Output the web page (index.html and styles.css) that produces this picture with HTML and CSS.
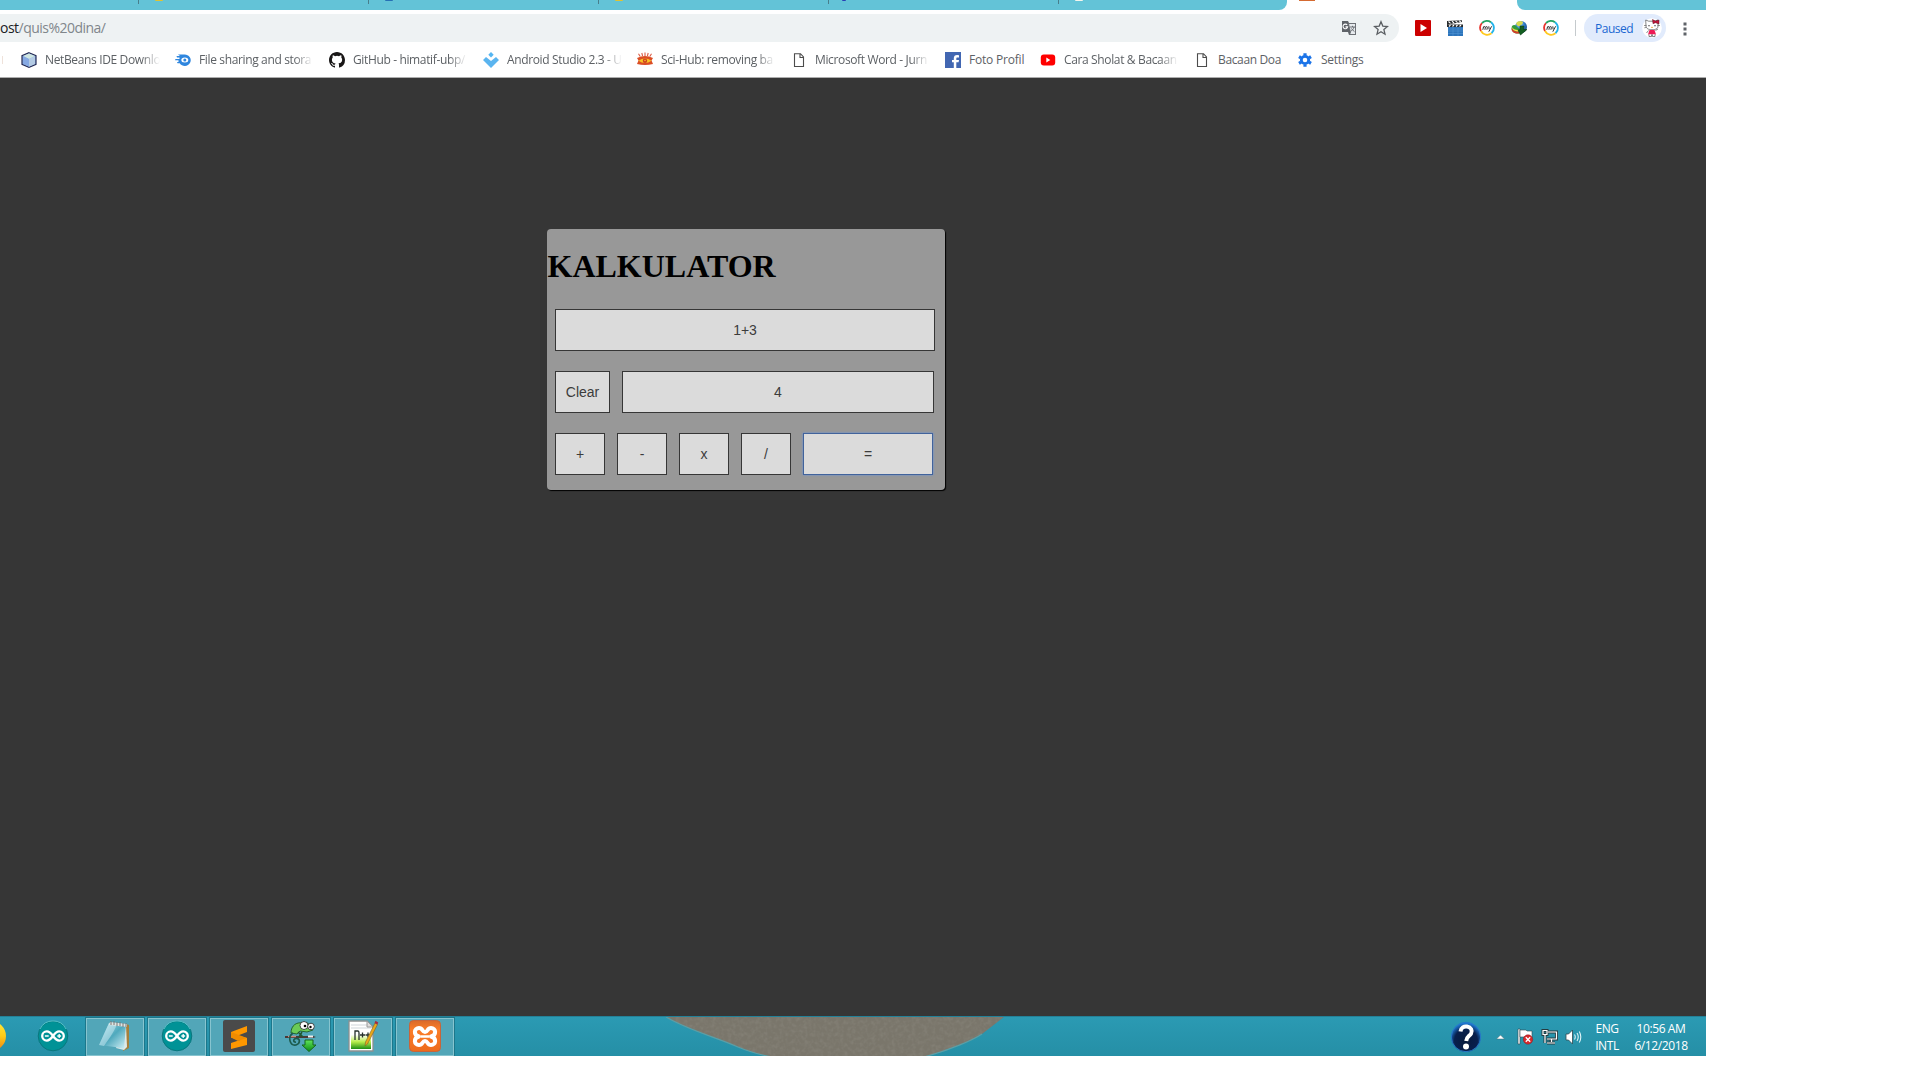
FILE: index.html
```
<!DOCTYPE html>
<html lang="id">
<head>
<meta charset="utf-8">
<title>Kalkulator</title>
<link rel="stylesheet" href="styles.css">
</head>
<body>
<svg class="defs" width="0" height="0">
  <defs>
    <linearGradient id="green" x1="0" y1="0" x2="0" y2="1"><stop offset="0" stop-color="#62e65d"/><stop offset="1" stop-color="#0a8c12"/></linearGradient>
    <linearGradient id="pad" x1="0" y1="0" x2="1" y2="1"><stop offset="0" stop-color="#b9e6ef"/><stop offset=".5" stop-color="#4fa9bd"/><stop offset="1" stop-color="#d8f3f8"/></linearGradient>
    <linearGradient id="npp" x1="0" y1="0" x2="0" y2="1"><stop offset=".2" stop-color="#fff"/><stop offset=".6" stop-color="#b9ee4c"/><stop offset="1" stop-color="#1c8e13"/></linearGradient>
    <linearGradient id="orange" x1="0" y1="0" x2="0" y2="1"><stop offset="0" stop-color="#d96a2a"/><stop offset=".3" stop-color="#fb7d28"/><stop offset="1" stop-color="#ed6b1c"/></linearGradient>
    <radialGradient id="help" cx=".5" cy=".62" r=".6"><stop offset="0" stop-color="#071a3d"/><stop offset=".65" stop-color="#081f4c"/><stop offset="1" stop-color="#1f7fdc"/></radialGradient>
    <radialGradient id="globe" cx=".4" cy=".3" r=".8"><stop offset="0" stop-color="#8dc8f5"/><stop offset=".5" stop-color="#2d78c4"/><stop offset="1" stop-color="#123c70"/></radialGradient>
    <linearGradient id="ffx" x1="0" y1="0" x2="0" y2="1"><stop offset="0" stop-color="#ffe93b"/><stop offset=".5" stop-color="#ffcb18"/><stop offset="1" stop-color="#ef8010"/></linearGradient>
    <symbol id="page" viewBox="0 0 16 16"><path d="M3.500 1.700h6l3 3.300v9.500h-9zM9 1.700v3.800h4" fill="none" stroke="#4c4c4c" stroke-width="1.100"/></symbol>
    <symbol id="my" viewBox="0 0 16 16">
      <g fill="none" stroke-width="1.800"><path d="M2 11A7 7 0 0 1 3 3" stroke="#e8352e"/><path d="M3 3A7 7 0 0 1 12 2.300" stroke="#25a565"/><path d="M12 2.300A7 7 0 0 1 12.500 13.300" stroke="#22b3ea"/><path d="M12.500 13.300A7 7 0 0 1 2 11" stroke="#ffc91f"/></g>
      <path d="M3.800 9.800l.8-3.300M4.400 7.400q2-1.800 2 0l-.5 2.400M6.400 7.400q2-1.800 2 0l-.5 2.400M9.800 6.300l.3 3M12.600 6.300l-2.800 5.400" fill="none" stroke="#343434" stroke-width="1"/>
    </symbol>
    <symbol id="arduino" viewBox="0 0 32 32">
      <circle cx="16" cy="16" r="14.800" fill="#009296" stroke="#0a777e" stroke-width="1"/><path d="M3 9A14.500 14.500 0 0 1 29 9" fill="none" stroke="#55c3c9"/>
      <path d="M16 16c-2.500-3.500-4.200-4.600-6.200-4.600a4.600 4.600 0 0 0 0 9.200c2 0 3.700-1.100 6.200-4.600s4.200-4.600 6.200-4.600a4.600 4.600 0 0 1 0 9.200c-2 0-3.700-1.100-6.200-4.600z" fill="none" stroke="#fff" stroke-width="2.300"/><path d="M7.900 16h3.800M20.300 16h3.800M22.200 14.100v3.800" stroke="#fff" stroke-width="1.300"/>
    </symbol>
  </defs>
</svg>

<div class="screen">
  <div class="tabs">
    <div class="tab first"></div>
    <div class="tab"><i class="fav yellow"></i></div>
    <div class="tab"><i class="fav blue"></i></div>
    <div class="tab"><i class="fav yellow"></i></div>
    <div class="tab"><i class="fav navy"></i></div>
    <div class="tab last"><i class="fav pale"></i></div>
    <div class="tab active"><i class="fav xampp"></i></div>
    <div class="tab rest"></div>
  </div>

  <div class="toolbar">
    <div class="omnibox">
      <div class="url"><b>ost</b>/quis%20dina/</div>
      <svg class="i16" viewBox="0 0 16 16"><path d="M1 1h6l1 2h7v12H8l-1-3H1z" fill="#5f6368"/><path d="M7.500 3.500h7v11H8.500l1-2z" fill="#e8ecef" stroke="#5f6368" stroke-width=".8"/><path d="M6.200 5A2.300 2.300 0 1 0 6.600 6.900H4.500" fill="none" stroke="#fff" stroke-width="1.100"/><path d="M9 7h5M11.500 5.800V7M13 7c-.5 2-1.600 3.300-3.400 4.300M10.200 8.500l3.300 3.200" fill="none" stroke="#5f6368" stroke-width=".9"/></svg>
      <svg class="i16 star" viewBox="0 0 16 16"><path d="M8 1.700l1.800 4.400 4.700.4-3.600 3.100 1.100 4.600L8 11.700l-4 2.500 1.100-4.600L1.500 6.500l4.700-.4z" fill="none" stroke="#5a5e62" stroke-width="1.300"/></svg>
    </div>
    <div class="extensions">
      <svg class="i16" viewBox="0 0 16 16"><rect width="16" height="16" rx="1" fill="#c00"/><path d="M5.500 4l6.500 4-6.500 4z" fill="#fff"/></svg>
      <svg class="i16" viewBox="0 0 16 16"><path d="M1 6.500h15V16H1z" fill="#2c74bb"/><path d="M1 9h15M1 11h15M1 13.500h15M6 6v10M11 6v10" stroke="#559bd8" stroke-width=".5"/><path d="M0 1l15-.8V2L0 4.500zM0 4.500h16V7H0z" fill="#272a2c"/><path d="M1.500 1.500l2 1.800M5 1.200l2 1.800M8.500 .9l2 1.800M12 .6l2 1.600M2 6.500l1.500-1.500M5.500 6.500L7 5M9 6.500L10.500 5M12.500 6.500L14 5" stroke="#fff" stroke-width="1.100"/></svg>
      <svg class="i16"><use href="#my"/></svg>
      <svg class="i16" viewBox="0 0 16 16"><circle cx="10" cy="7" r="6" fill="url(#globe)"/><path d="M6 2c3-2 6-1 6 .5S10 5 8.500 6 6 5 5 4z" fill="#d8d94e"/><path d="M1 6c2-2 4-1 5 1l4 3-1 3C5 15-1 12 1 6z" fill="#329a3c"/><path d="M.6 8c2 3 4 4 8 3.500v2C4 14 0 12 .6 8z" fill="#d9372a"/><path d="M1 7c1 2 4 3.500 7 3v1.300C4 12 1.200 10 1 7z" fill="#ffe04a"/><path d="M9 6h4l-.5 3.500H16L9.500 15 7 10h2z" fill="#145f20" stroke="#063d12" stroke-width=".6"/></svg>
      <svg class="i16"><use href="#my"/></svg>
    </div>
    <div class="divider"></div>
    <div class="profile"><span>Paused</span>
      <svg width="20" height="20" viewBox="0 0 20 20"><circle cx="10" cy="10" r="9.800" fill="#fff"/><path d="M4 8l-.3-6 3 1.200h6L16 2v6c0 2.800-2.500 3.700-6 3.700S4 10.500 4 8z" fill="#fff" stroke="#555" stroke-width=".7"/><path d="M10.500 1.500l3 1.500 3.500-1v4l-3.500-1.300-2.500 1z" fill="#c4143a" stroke="#5b1625" stroke-width=".5"/><path d="M7 7v1.300M13 7v1.300" stroke="#222"/><path d="M2 7.500h2.500M2.300 9.800l2.300-.5M15.500 7.500H18" stroke="#555" stroke-width=".6"/><ellipse cx="10" cy="9.300" rx=".9" ry=".6" fill="#eca32a"/><path d="M7.500 12h5l1.500 4.500H6z" fill="#ee1b55"/><path d="M6.500 12.500l-2 2.500M13.500 12.500L16 11M7 16.500v2h2.500v-2M10.500 16.500v2H13v-2" stroke="#555" stroke-width=".7" fill="#fff"/></svg>
    </div>
    <svg class="more" width="4" height="14" viewBox="0 0 4 14"><path d="M.5.5h3v3h-3zM.5 5.500h3v3h-3zM.5 10.500h3v3h-3z" fill="#5f6368"/></svg>
  </div>

  <div class="bookmarks">
    <div class="cut"></div>
    <div class="bm long"><svg class="i16" viewBox="0 0 16 16"><path d="M8 .7l7 3v8.600L8 15.300l-7-3V3.700z" fill="#8eb2e2" stroke="#252b55" stroke-width="1.200"/><path d="M8 1.500L14 4 8 7 2 4z" fill="#cfe6e1"/><path d="M8 7l6-3v8l-6 2.700z" fill="#b4cbe4"/><path d="M2 4l6 3v7.700L2 12z" fill="#86a9e3"/></svg><span>NetBeans IDE Downlo</span></div>
    <div class="bm long"><svg class="i16" viewBox="0 0 16 16"><path d="M3 2.500h6.500A6 5.700 0 1 1 4.700 11.300H2.500L2 10h1.500V8.300H0L.5 7h4V5.500H2L1.500 4H5z" fill="#2f86de"/><ellipse cx="9.800" cy="8" rx="3.500" ry="2.500" fill="#fff"/><circle cx="9.800" cy="8" r="1.500" fill="#2f86de"/></svg><span>File sharing and stora</span></div>
    <div class="bm long"><svg class="i16" viewBox="0 0 16 16"><path fill="#191717" d="M8 0C3.580 0 0 3.580 0 8c0 3.540 2.290 6.530 5.470 7.590.4.070.55-.17.55-.38 0-.19-.01-.82-.01-1.490-2.010.37-2.530-.49-2.690-.94-.09-.23-.48-.94-.82-1.130-.28-.15-.68-.52-.01-.53.63-.01 1.080.58 1.230.82.72 1.210 1.870.87 2.330.66.070-.52.280-.87.510-1.070-1.780-.2-3.640-.89-3.640-3.950 0-.87.310-1.590.82-2.150-.08-.2-.36-1.020.08-2.120 0 0 .67-.21 2.200.82a7.600 7.600 0 0 1 4 0c1.530-1.040 2.200-.82 2.200-.82.44 1.100.16 1.920.08 2.120.51.56.82 1.270.82 2.150 0 3.070-1.870 3.750-3.650 3.950.29.25.54.73.54 1.480 0 1.070-.01 1.930-.01 2.200 0 .21.15.46.55.38A8 8 0 0 0 16 8c0-4.420-3.580-8-8-8z"/></svg><span>GitHub - himatif-ubp/</span></div>
    <div class="bm long"><svg class="i16" viewBox="0 0 16 16"><path d="M8 0l2.700 2.700L8 5.400 5.300 2.700z" fill="#55b6f2"/><path d="M0 8l3-3 5 4 5-4 3 3-8 8z" fill="#5ab4ef"/></svg><span>Android Studio 2.3 - U</span></div>
    <div class="bm long"><svg class="i16" viewBox="0 0 16 16"><path d="M1.500 1.800l1.700 2.700M4.800 1l.8 3M8 .5V4M11.200 1l-.8 3M14.500 1.800l-1.700 2.700" stroke="#dc5c45" stroke-width="1.100"/><path d="M0 6q8-4 16 0l-1.500 2.500L16 12q-8 2-16 0l1.500-3.500z" fill="#db4d24"/><path d="M1.500 8.700Q8 4.500 14.500 8.700 8 13.500 1.500 8.700z" fill="#f9c325"/><circle cx="8" cy="8.700" r="2.200" fill="#cf4220"/><circle cx="8" cy="8.500" r=".8" fill="#fac32b"/></svg><span>Sci-Hub: removing ba</span></div>
    <div class="bm long"><svg class="i16"><use href="#page"/></svg><span>Microsoft Word - Jurn</span></div>
    <div class="bm foto"><svg class="i16" viewBox="0 0 16 16"><path d="M0 0h16v16H0z" fill="#4267b2"/><path d="M14 3.200V5.500h-1.500c-.9 0-1.200.5-1.200 1.200V8H14l-.4 2.300h-2.300V16H8.800v-5.700H7V8h1.800V6.300C8.800 4.200 10 3 12.100 3z" fill="#fff"/></svg><span>Foto Profil</span></div>
    <div class="bm long"><svg class="i16" viewBox="0 0 16 16"><rect x=".8" y="2.500" width="14.400" height="11" rx="3" fill="#f00"/><path d="M6.300 5.500l4 2.500-4 2.500z" fill="#fff"/></svg><span>Cara Sholat &amp; Bacaan</span></div>
    <div class="bm doa"><svg class="i16"><use href="#page"/></svg><span>Bacaan Doa</span></div>
    <div class="bm set"><svg class="i16" viewBox="0 0 16 16"><circle cx="9" cy="8" r="3.700" fill="none" stroke="#1a73e8" stroke-width="2.800"/><path d="M9 1.200v2.300M9 12.500v2.300M3 4.600l2 1.200M13 10.200l2 1.200M3 11.400l2-1.200M13 5.800l2-1.200" stroke="#1a73e8" stroke-width="3.200"/></svg><span>Settings</span></div>
  </div>

  <main class="content">
    <form class="calculator">
      <h1>KALKULATOR</h1>
      <div class="row"><div class="key display">1+3</div></div>
      <div class="row"><div class="key clear">Clear</div><div class="key result">4</div></div>
      <div class="row"><div class="key op">+</div><div class="key op">-</div><div class="key op">x</div><div class="key op">/</div><div class="key equals">=</div></div>
    </form>
  </main>

  <div class="taskbar">
    <svg class="wallpaper" width="400" height="39" viewBox="0 0 400 39">
      <defs><filter id="grain" x="0" y="0" width="1" height="1"><feTurbulence type="fractalNoise" baseFrequency=".25" numOctaves="3" seed="4"/><feColorMatrix values="0 0 0 0 .35  0 0 0 0 .34  0 0 0 0 .3  .5 0 0 0 -.2"/><feComposite in2="SourceGraphic" operator="in"/></filter></defs>
      <path d="M26 0C50 14 76 20 98 30Q112 36 132 40H284C310 33 333 23 342 17L364 0z" fill="#7a766b"/><path d="M26 0C50 14 76 20 98 30Q112 36 132 40H284C310 33 333 23 342 17L364 0z" filter="url(#grain)"/>
      <path d="M26 0C50 14 76 20 98 30Q112 36 132 40M284 40C310 33 333 23 342 17" fill="none" stroke="#5a9fa7" stroke-width="1.200"/>
    </svg>
    <svg class="edge" width="6" height="40" viewBox="0 0 6 40"><circle cx="-9" cy="19" r="15" fill="url(#ffx)"/></svg>
    <div class="app plain"><svg width="32" height="32"><use href="#arduino"/></svg></div>
    <div class="app"><svg width="32" height="32" viewBox="0 0 32 32"><path d="M27 4l3 1v23l-6 3z" fill="#a5803c"/><path d="M27 5l1 22-3 3-8-2z" fill="#dfe9e8"/><path d="M10 3l17 2-2 24-9-2L0 25z" fill="url(#pad)"/><path d="M10 3l8 1C15 13 8 21 5 26l-5-1z" fill="#e0f5fa" opacity=".45"/><path d="M11 2l17 2v3L10 5z" fill="#dfe5e3"/><path d="M12 1v4M15 1v4M18 2v4M21 2v4M24 3v4M27 3v4" stroke="#777" stroke-width="1"/></svg></div>
    <div class="app"><svg width="32" height="32"><use href="#arduino"/></svg></div>
    <div class="app"><svg width="32" height="32" viewBox="0 0 32 32"><rect width="32" height="32" rx="2" fill="#4a4a4a"/><path d="M8 12L24 6v6l-9 3.500L24 18v7L8 29v-6l9-3-9-2.500z" fill="#ff9800"/><path d="M8 12l16 6-9 3-7-3.500z" fill="#f08c00"/></svg></div>
    <div class="app"><svg width="32" height="32" viewBox="0 0 32 32"><path d="M0 16h28l3 1-3 1H0z" fill="#4b3936"/><path d="M3 16.500h8" stroke="#c98e81" stroke-width="1.500"/><path d="M23 16.500h5" stroke="#eee" stroke-width="2"/><path d="M6 13C6 5 12 2 17 3c5-2 9 2 11 7l-6 2-7-1-3 3z" fill="#6bcb57" stroke="#14511b" stroke-width=".8"/><path d="M8 13C2 17 5 26 11 25c5-2 4-7 0-6.500-3 .5-3 4 0 3.500" fill="none" stroke="#1c5b4e" stroke-width="1.700"/><path d="M13 12l5 5M17 12l-3 5" stroke="#205831" stroke-width="1.500"/><circle cx="19" cy="5.500" r="4" fill="#fff" stroke="#222" stroke-width=".8"/><circle cx="26" cy="6.500" r="3.300" fill="#fff" stroke="#222" stroke-width=".8"/><circle cx="20" cy="6" r="1.300"/><circle cx="25.500" cy="7" r="1.200"/><path d="M20 20h8v5h3l-7 6.500-7-6.500h3z" fill="url(#green)" stroke="#16671d"/></svg></div>
    <div class="app"><svg width="32" height="32" viewBox="0 0 32 32"><path d="M2 1h18l6 6v24H2z" fill="#fff" stroke="#8c9090" stroke-width="1.300"/><path d="M4 5h16M4 8h20" stroke="#cfd5da"/><path d="M4 11h20v18H4z" fill="url(#npp)"/><path d="M20 1v6h6z" fill="#ddd" stroke="#9a9a9a"/><path d="M8 20v-9h3q1 0 1 2v7M13 15h5M15.500 12.500v5M18.500 15h5M21 12.500v5" fill="none" stroke="#26302c" stroke-width="1.300"/><path d="M28 3l2.500 1.500L20.500 24 18 26l.5-4z" fill="#e9a719" stroke="#77622f" stroke-width=".6"/><path d="M28.500 .8l2.800 1.800-1 2-2.800-1.600z" fill="#a82b40"/></svg></div>
    <div class="app"><svg width="32" height="32" viewBox="0 0 32 32"><rect x=".5" y=".5" width="31" height="31" rx="4" fill="url(#orange)" stroke="#c7653a"/><path d="M10 16.500C4 15 5 8 10 8c4 0 3 4 6 4s2-4 6-4c5 0 6 7 0 8.500 6 1.500 5 8.500 0 8.500-4 0-3-4-6-4s-2 4-6 4c-5 0-6-7 0-8.500z" fill="none" stroke="#fff" stroke-width="4" stroke-linejoin="round"/><path d="M12 16.500h8" stroke="#fff" stroke-width="2.500"/></svg></div>

    <div class="tray">
      <svg class="help" width="32" height="32" viewBox="0 0 32 32"><circle cx="16" cy="16" r="14.700" fill="url(#help)" stroke="#2779c9"/><path d="M10.500 10.500C11 6.500 14 5 17 5.500c4 .6 5.800 4 4 7.200-1.500 2.500-4.500 3-4.800 7.300" fill="none" stroke="#fff" stroke-width="4"/><circle cx="16" cy="25.500" r="3" fill="#fff"/></svg>
      <svg class="up" width="9" height="6" viewBox="0 0 9 6"><path d="M.5 5h8L4.500 1z" fill="#fff" stroke="#466d76" stroke-width=".5"/></svg>
      <svg class="flag" width="17" height="17" viewBox="0 0 17 17"><path d="M1 1h2v15H1z" fill="#fff" stroke="#33484d" stroke-width=".6"/><path d="M3 2h6l1 1h5v7H9L8 9H3z" fill="#fff" stroke="#33484d" stroke-width=".6"/><circle cx="11" cy="11.500" r="4.700" fill="#d8292b" stroke="#8b1e20" stroke-width=".5"/><path d="M8.800 9.300l4.400 4.400M13.200 9.300l-4.400 4.400" stroke="#fff" stroke-width="1.400"/></svg>
      <svg class="net" width="18" height="16" viewBox="0 0 18 16"><g fill="none" stroke="#253b40" stroke-width="3"><path d="M7 3h8.500v7H6M10 10v3M6 14h8"/><path d="M2 1.500h4v4H2zM4 5.500V14"/></g><g fill="none" stroke="#fff" stroke-width="1.200"><path d="M7 3h8.500v7H6M10.500 10v3M6 14h8M2 1.500h4v4H2zM4 5.500V14"/></g></svg>
      <svg class="sound" width="17" height="16" viewBox="0 0 17 16"><path d="M1 5h2.500l4-4v14l-4-4H1z" fill="#fff" stroke="#304a50" stroke-width=".8"/><path d="M9.500 5.500q1.500 2.500 0 5M12 4q2.500 4 0 8M14.300 2.500q3 5.500 0 11" fill="none" stroke="#dff4f6" stroke-width="1.100"/></svg>
      <div class="lang"><span>ENG</span><span>INTL</span></div>
      <div class="clock"><span>10:56 AM</span><span>6/12/2018</span></div>
    </div>
  </div>
</div>
</body>
</html>
```
FILE: styles.css
```
* { box-sizing: border-box; }
body { margin: 0; background: #fff; font-family: "Open Sans", "Noto Sans", sans-serif; }
svg { display: block; flex: none; }
.defs { position: absolute; }
.i16 { width: 16px; height: 16px; }
.screen { width: 1706px; height: 1056px; display: flex; flex-direction: column; overflow: hidden; }

.tabs { height: 10px; display: flex; background: #fff; }
.tab { width: 230px; height: 10px; flex: none; background: #63c3d7; background-image: linear-gradient(#487f8c, #487f8c); background-size: 1px 4px; background-repeat: no-repeat; padding-left: 16px; }
.tab.first { width: 138px; background-image: none; }
.tab.last { width: 229px; border-bottom-right-radius: 8px; }
.tab.active { background: #fff; padding-left: 12px; }
.tab.rest { width: 189px; background-image: none; border-bottom-left-radius: 8px; }
.fav { display: block; width: 8px; height: 1px; margin-left: 1px; border-radius: 0 0 4px 4px; }
.yellow { background: #e0c330; }
.blue { background: #2671b5; }
.navy { width: 4px; margin-left: -2px; background: #2740b5; }
.pale { background: #f5f6ee; }
.xampp { width: 16px; margin-left: 0; background: #d56a31; border-radius: 0; }

.toolbar { height: 36px; flex: none; display: flex; align-items: flex-start; padding-top: 4px; }
.omnibox { width: 1399px; height: 28px; background: #eef2f3; border-radius: 0 14px 14px 0; display: flex; align-items: center; padding-right: 10px; }
.url { flex: 1; font-size: 14px; line-height: 28px; letter-spacing: -.52px; color: #80868b; white-space: nowrap; }
.url b { font-weight: 400; color: #202124; }
.star { margin-left: 16px; }
.extensions { display: flex; gap: 16px; padding: 6px 0 0 16px; }
.divider { width: 1px; height: 16px; background: #c5cacd; margin: 6px 8px 0 16px; }
.profile { width: 82px; height: 28px; border-radius: 14px; background: #e1ebfc; color: #1a67d2; font-size: 12px; letter-spacing: -.5px; display: flex; align-items: center; justify-content: space-between; padding: 0 4px 0 11px; }
.more { margin: 8px 0 0 17px; }

.bookmarks { height: 32px; flex: none; display: flex; gap: 16px; padding-bottom: 4px; border-bottom: 1px solid #adadad; align-items: center; }
.cut { width: 5px; height: 8px; background: linear-gradient(#efe2da, #efe2da) 2px 0 / 1px 8px no-repeat; }
.bm { display: flex; gap: 8px; align-items: center; flex: none; }
.bm span { flex: 1; font-size: 12px; line-height: 18px; letter-spacing: -.36px; color: #5d6165; white-space: nowrap; }
.long { width: 138px; }
.long span { -webkit-mask-image: linear-gradient(90deg, #000 84%, transparent); mask-image: linear-gradient(90deg, #000 84%, transparent); }
.foto { width: 79px; }
.foto span { letter-spacing: -.2px; }
.doa { width: 86px; }
.set { width: 80px; }
.set span { padding-left: 1px; letter-spacing: -.25px; }

.content { height: 938px; flex: none; background: #363636; padding: 151px 0 0 547px; }
.calculator { width: 398px; height: 261px; margin: 0; background: #989898; border-radius: 4px; box-shadow: 1px 1px 1px #000; overflow: hidden; }
.calculator h1 { margin: 19px 0 24px; padding-left: .5px; font: bold 32px/37px "Liberation Serif", serif; color: #000; }
.row { display: flex; gap: 12px; height: 42px; margin: 0 0 20px 8px; }
.key { height: 42px; border: 1px solid #363636; background: #dbdbdb; color: #3c3c3c; font: 14px/40px "Liberation Sans", sans-serif; text-align: center; }
.display { width: 380px; }
.clear { width: 55px; }
.result { width: 312px; }
.op { width: 50px; }
.equals { width: 130px; border-color: #41639c; box-shadow: 0 0 2px #5f8fe0; }

.taskbar { height: 40px; flex: none; position: relative; display: flex; align-items: center; background: linear-gradient(#2b9ab3, #258fa6); border-top: 1px solid #238198; }
.wallpaper { position: absolute; left: 640px; top: 0; }
.edge { margin-right: 18px; }
.app { width: 58px; height: 38px; margin-right: 4px; display: flex; align-items: center; justify-content: center; background: #52a6b8; border: 1px solid #87c4cf; outline: 1px solid #1c778b; padding-bottom: 1px; }
.app.plain { background: none; border-color: transparent; outline: none; }
.tray { margin-left: auto; display: flex; align-items: center; color: #fff; font-size: 12px; line-height: 17px; letter-spacing: -.4px; padding-right: 18px; }
.up { margin-left: 14px; }
.flag { margin-left: 12px; }
.net { margin-left: 7px; }
.sound { margin-left: 6px; }
.lang, .clock { display: flex; flex-direction: column; align-items: center; }
.lang { width: 28px; margin-left: 11px; }
.clock { width: 54px; margin-left: 13px; }
```
